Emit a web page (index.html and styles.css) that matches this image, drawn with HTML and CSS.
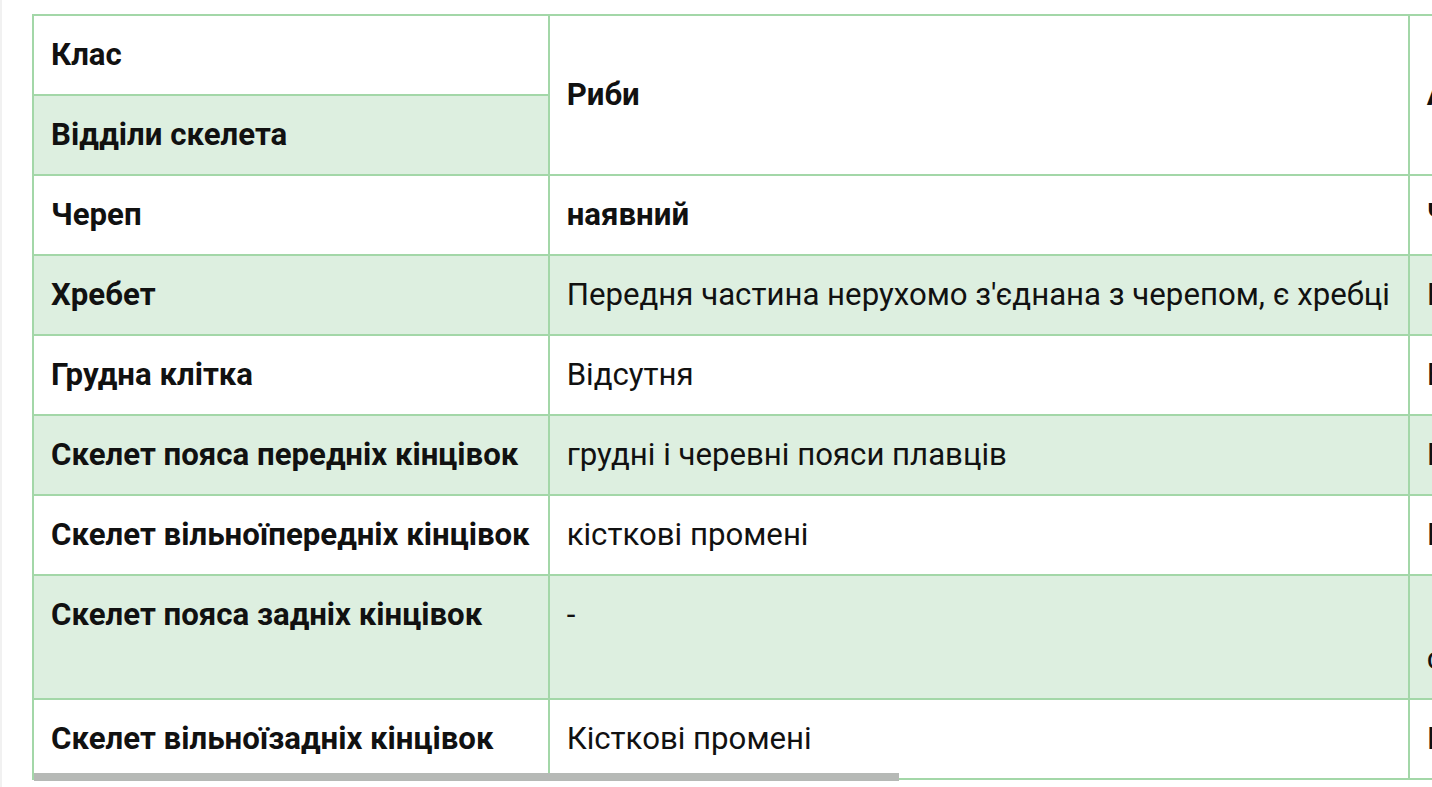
FILE: index.html
```html
<!DOCTYPE html>
<html lang="uk">
<head>
<meta charset="utf-8">
<title>Скелет хребетних</title>
<link rel="stylesheet" href="styles.css">
</head>
<body>
<div class="page">
  <div class="scroller">
    <table class="skeleton">
      <tbody>
        <tr class="row-white">
          <th class="head">Клас</th>
          <th class="mid" rowspan="2">Риби</th>
          <th class="mid wide" rowspan="2">Амфібії</th>
        </tr>
        <tr class="row-green">
          <th class="head">Відділи скелета</th>
        </tr>
        <tr class="row-white">
          <th class="head">Череп</th>
          <th class="head">наявний</th>
          <th class="head wide">Череп наявний, сплощений</th>
        </tr>
        <tr class="row-green">
          <th class="head">Хребет</th>
          <td>Передня частина нерухомо з'єднана з черепом, є хребці</td>
          <td class="wide">Перший шийний хребець рухомо з'єднаний з черепом</td>
        </tr>
        <tr class="row-white">
          <th class="head">Грудна клітка</th>
          <td>Відсутня</td>
          <td class="wide">Відсутня, ребра недорозвинені</td>
        </tr>
        <tr class="row-green">
          <th class="head">Скелет пояса передніх кінцівок</th>
          <td>грудні і черевні пояси плавців</td>
          <td class="wide">Плечовий пояс: лопатки, ключиці, вороняча кістка</td>
        </tr>
        <tr class="row-white">
          <th class="head">Скелет вільноїпередніх кінцівок</th>
          <td>кісткові промені</td>
          <td class="wide">Плече, передпліччя, кисть</td>
        </tr>
        <tr class="row-green">
          <th class="head">Скелет пояса задніх кінцівок</th>
          <td>-</td>
          <td class="wide"><br>складається з трьох пар тазових кісток</td>
        </tr>
        <tr class="row-white">
          <th class="head">Скелет вільноїзадніх кінцівок</th>
          <td>Кісткові промені</td>
          <td class="wide">Пояс, стегно, гомілка, стопа</td>
        </tr>
      </tbody>
    </table>
  </div>
  <div class="scrollbar"></div>
</div>
</body>
</html>
```
FILE: styles.css
```css
html, body {
  margin: 0;
  padding: 0;
  background: #ffffff;
}

body {
  font-family: Roboto, "Liberation Sans", "Noto Sans", sans-serif;
  color: #111111;
  overflow: hidden;
}

.page {
  position: relative;
  width: 1432px;
  height: 787px;
  box-sizing: border-box;
  border-left: 2px solid #f1f1f1;
  padding: 14px 0 0 30px;
  overflow: hidden;
}

.scroller {
  overflow: hidden;
  width: 100%;
}

.skeleton {
  border-collapse: collapse;
  font-size: 31.2px;
  line-height: 44px;
  white-space: nowrap;
}

.skeleton th,
.skeleton td {
  border: 2px solid #a3d7a8;
  padding: 17px 18px 17px 17px;
  text-align: left;
  vertical-align: top;
}

.skeleton th {
  font-weight: 700;
}

.skeleton td {
  font-weight: 400;
}

.skeleton th.mid {
  vertical-align: middle;
  background: #ffffff;
}

.skeleton .wide {
  min-width: 860px;
}

.row-white {
  background: #ffffff;
}

.row-green {
  background: #ddefe0;
}

.scrollbar {
  position: absolute;
  left: 32px;
  top: 773px;
  width: 865px;
  height: 8px;
  background: #b6b9b6;
}
```
